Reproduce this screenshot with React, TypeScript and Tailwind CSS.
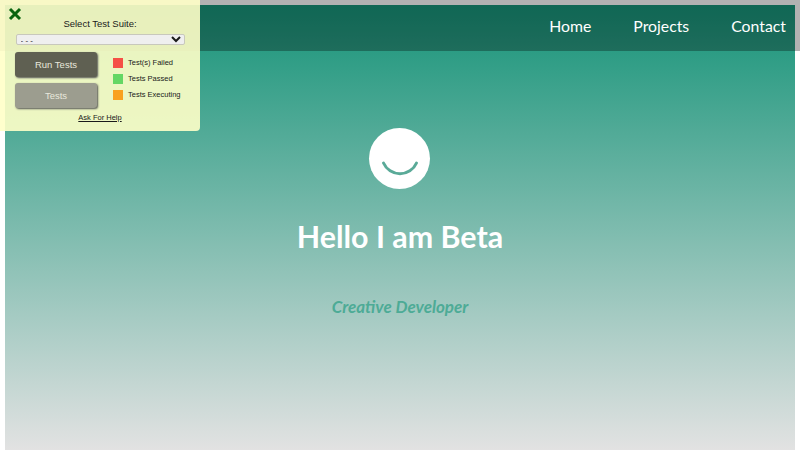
const App = () => {
  return (
    <div className="relative h-[450px] w-[800px] overflow-hidden bg-white p-[5px] font-['Lato',sans-serif]">
      <main className="flex h-[445px] flex-col items-center bg-[linear-gradient(to_bottom,#179479,#e2e2e2)] pt-[123px]">
        <div className="mr-[1px] flex h-[61px] w-[61px] items-center justify-center rounded-full bg-white">
          <svg width="61" height="61" viewBox="0 0 61 61" fill="none">
            <path d="M14.5 35 A18 18 0 0 0 47.5 35" stroke="#5aaa98" strokeWidth="3" strokeLinecap="round" />
          </svg>
        </div>
        <h1 className="mt-[22px] text-[30.4px] font-bold leading-[50px] text-white">Hello I am Beta</h1>
        <p className="mt-[33px] text-[17px] font-bold italic leading-[26px] text-[#4dab96]">Creative Developer</p>
      </main>

      <nav className="absolute left-0 top-0 flex h-[51px] w-full items-center justify-end gap-[42px] bg-black/30 pr-[14px] text-[15.8px] text-white">
        <a>Home</a>
        <a>Projects</a>
        <a>Contact</a>
      </nav>

      <aside className="absolute left-0 top-0 h-[131px] w-[200px] rounded-br-[4px] bg-[#ffffc8]/90 font-['Liberation_Sans',sans-serif] text-[#1a1a1a]">
        <svg className="absolute left-[8px] top-[7px]" width="14" height="14" viewBox="0 0 14 14" fill="none">
          <path d="M2 2 L12 12 M12 2 L2 12" stroke="#0a640f" strokeWidth="3" />
        </svg>
        <p className="pt-[17px] text-center text-[9.5px] leading-[14px]">Select Test Suite:</p>
        <select className="mx-auto mt-[3px] block h-[11px] w-[169px] rounded-[2px] border border-[#c8c8bc] bg-[#efefef] text-[8px] leading-[9px]">
          <option>- - -</option>
        </select>
        <div className="ml-[15px] mt-[7px] flex">
          <div className="flex w-[82px] flex-col gap-[6px]">
            <button className="h-[25px] rounded-[3px] bg-[#5f6052] pt-[1px] text-[9.5px] text-[#e8e8dc] shadow-[1px_1px_2px_#555]">Run Tests</button>
            <button className="h-[25px] rounded-[3px] bg-[#9c9d8f] pt-[1px] text-[9.5px] text-[#e8e8dc] shadow-[1px_1px_2px_#555]">Tests</button>
          </div>
          <ul className="ml-[16px] flex flex-col gap-[6px] pt-[6px] text-[7.5px] leading-[10px]">
            <li className="flex items-center gap-[5px]"><span className="h-[10px] w-[10px] bg-[#f55046]" />Test(s) Failed</li>
            <li className="flex items-center gap-[5px]"><span className="h-[10px] w-[10px] bg-[#64d764]" />Tests Passed</li>
            <li className="flex items-center gap-[5px]"><span className="h-[10px] w-[10px] bg-[#f9a11e]" />Tests Executing</li>
          </ul>
        </div>
        <a className="mt-[5px] block text-center text-[7.5px] leading-[10px] underline">Ask For Help</a>
      </aside>
    </div>
  )
}

export default App
